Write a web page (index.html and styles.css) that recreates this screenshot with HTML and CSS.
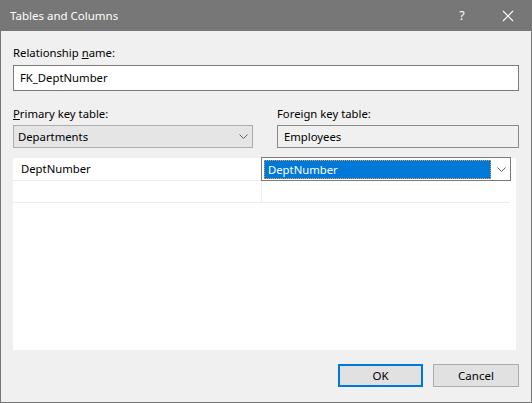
FILE: index.html
```html
<!DOCTYPE html>
<html lang="en">
<head>
    <meta charset="UTF-8">
    <title>Tables and Columns</title>
    <link rel="stylesheet" href="styles.css">
</head>
<body>
    <div class="window">
        <div class="titlebar">
            <span class="title">Tables and Columns</span>
            <span class="title-help">?</span>
            <span class="title-close">
                <svg width="12" height="12" viewBox="0 0 12 12">
                    <path d="M1 1 L11 11 M11 1 L1 11" stroke="#fff" stroke-width="1.1" fill="none"/>
                </svg>
            </span>
        </div>

        <div class="content">
            <label class="label">Relationship <u>n</u>ame:</label>
            <div class="textbox">FK_DeptNumber</div>

            <div class="tables">
                <div class="table-col">
                    <label class="label"><u>P</u>rimary key table:</label>
                    <div class="combo">
                        <span>Departments</span>
                        <svg class="chevron" width="9" height="5" viewBox="0 0 9 5">
                            <path d="M0.5 0.5 L4.5 4.5 L8.5 0.5" stroke="#606060" fill="none"/>
                        </svg>
                    </div>
                </div>
                <div class="table-col foreign">
                    <label class="label">Foreign key table:</label>
                    <div class="readonly">Employees</div>
                </div>
            </div>

            <div class="grid">
                <div class="grid-row">
                    <div class="cell">DeptNumber</div>
                    <div class="cell cell-edit">
                        <div class="grid-combo">
                            <span class="selected">DeptNumber</span>
                            <svg class="chevron" width="9" height="5" viewBox="0 0 9 5">
                                <path d="M0.5 0.5 L4.5 4.5 L8.5 0.5" stroke="#606060" fill="none"/>
                            </svg>
                        </div>
                    </div>
                </div>
                <div class="grid-row">
                    <div class="cell"></div>
                    <div class="cell"></div>
                </div>
            </div>

            <div class="buttons">
                <button class="btn btn-default">OK</button>
                <button class="btn btn-cancel">Cancel</button>
            </div>
        </div>
    </div>
</body>
</html>
```

FILE: styles.css
```css
* {
    margin: 0;
    padding: 0;
    box-sizing: border-box;
}

body {
    font-family: 'Noto Sans', 'Liberation Sans', sans-serif;
    font-size: 11.3px;
    color: #000;
    background: #f0f0f0;
}

/* Window frame */
.window {
    width: 532px;
    height: 403px;
    border: 1px solid #777;
    border-top: none;
    background: #f0f0f0;
    display: flex;
    flex-direction: column;
}

.titlebar {
    height: 31px;
    background: #777;
    color: #fff;
    display: flex;
    align-items: center;
    padding-left: 9px;
}

.title {
    flex-grow: 1;
    font-size: 11.5px;
}

.title-help {
    width: 46px;
    text-align: center;
    font-size: 12.5px;
}

.title-close {
    width: 46px;
    display: flex;
    justify-content: center;
    align-items: center;
}

/* Body */
.content {
    flex-grow: 1;
    padding: 14px 12px 0 12px;
    display: flex;
    flex-direction: column;
}

.label {
    display: block;
    height: 16px;
    line-height: 16px;
    white-space: nowrap;
}

.textbox {
    margin-top: 4px;
    height: 26px;
    border: 1px solid #7a7a7a;
    background: #fff;
    padding-left: 6px;
    line-height: 24px;
}

.tables {
    display: grid;
    grid-template-columns: 240px 1fr;
    gap: 24px;
    margin-top: 15px;
}

.combo {
    margin-top: 3px;
    height: 23px;
    border: 1px solid #adadad;
    background: #e5e5e5;
    display: flex;
    align-items: center;
    justify-content: space-between;
    padding: 0 4px 0 4px;
}

.readonly {
    margin-top: 3px;
    height: 23px;
    border: 1px solid #8a8a8a;
    background: #f0f0f0;
    padding-left: 6px;
    line-height: 21px;
}

/* Columns grid */
.grid {
    margin-top: 10px;
    width: 503px;
    height: 192px;
    background: #fff;
}

.grid-row {
    display: flex;
    height: 22px;
    border-bottom: 1px solid #ededed;
    width: 497px;
}

.grid-row:first-child {
    height: 23px;
}

.cell {
    width: 248px;
    padding-left: 8px;
    line-height: 22px;
}

.cell + .cell {
    width: 249px;
    border-left: 1px solid #ededed;
    padding-left: 0;
}

.cell-edit {
    position: relative;
}

.grid-combo {
    position: absolute;
    top: -1px;
    left: -1px;
    width: 250px;
    height: 24px;
    border: 1px solid #7a7a7a;
    background: #fff;
    display: flex;
    align-items: center;
    padding: 0 4px 0 2px;
}

.selected {
    flex-grow: 1;
    height: 19px;
    margin-right: 6px;
    background: #0078d7;
    color: #fff;
    line-height: 17px;
    padding-left: 3px;
    border: 1px dotted #000;
    outline: 1px dotted #e8a040;
    outline-offset: -1px;
}

/* Dialog buttons */
.buttons {
    display: flex;
    justify-content: flex-end;
    gap: 10px;
    margin-top: 14px;
}

.btn {
    font-family: inherit;
    font-size: 11.5px;
    height: 23px;
    background: #e1e1e1;
    border: 1px solid #adadad;
    color: #000;
}

.btn-default {
    width: 85px;
    border: 2px solid #0078d7;
}

.btn-cancel {
    width: 86px;
}
```
